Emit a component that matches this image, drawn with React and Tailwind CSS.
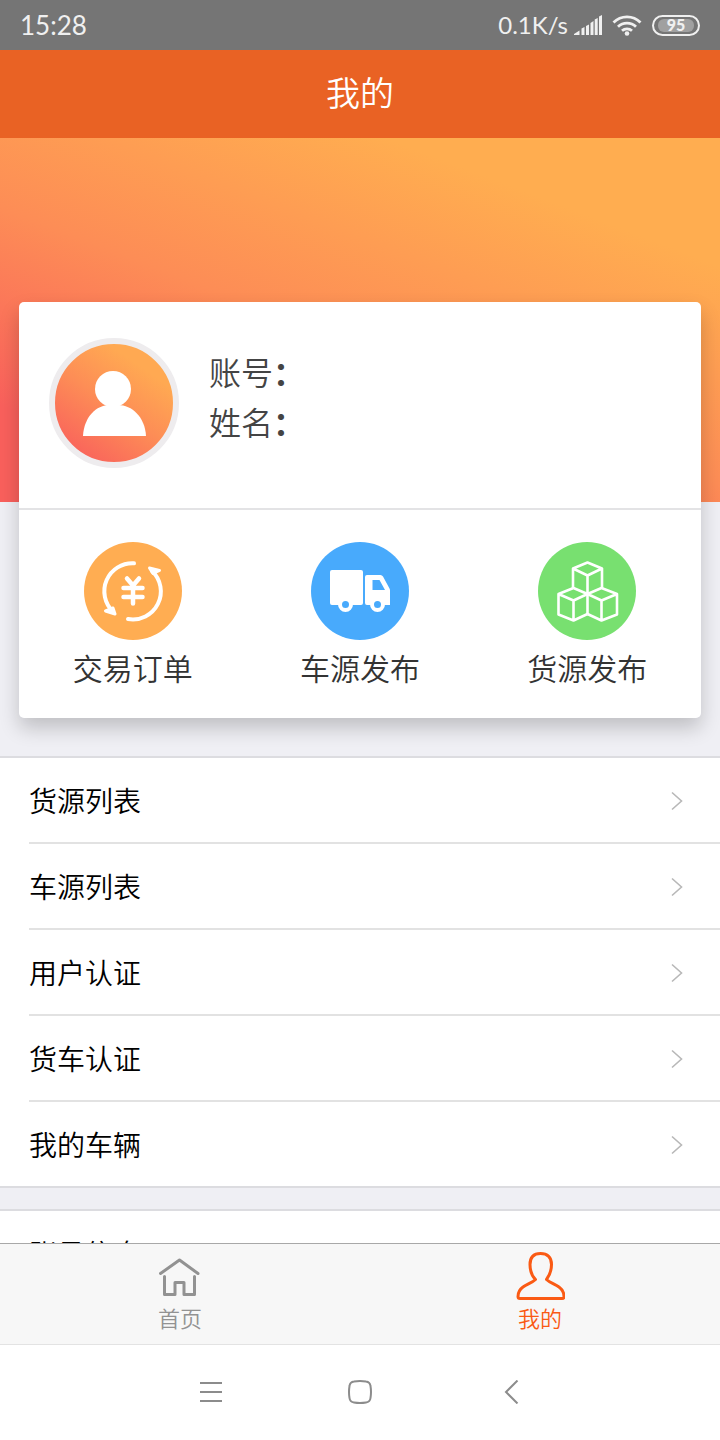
import { useState } from "react";

const SHORTCUTS = [
    { label: "交易订单", tone: "bg-[#ffad52]", icon: OrderIcon },
    { label: "车源发布", tone: "bg-[#48aafc]", icon: TruckIcon },
    { label: "货源发布", tone: "bg-[#78e070]", icon: BoxesIcon },
];

const MENU_GROUPS = [
    ["货源列表", "车源列表", "用户认证", "货车认证", "我的车辆"],
    ["账号信息"],
];

const TABS = [
    { id: "home", label: "首页", icon: HomeIcon },
    { id: "mine", label: "我的", icon: PersonIcon },
];

function OrderIcon() {
    return (
        <svg viewBox="0 0 98 98" className="size-full" fill="none" stroke="#fff" strokeWidth="4" strokeLinecap="round" strokeLinejoin="round" aria-hidden="true">
            <path d="M50 21.300A28 28 0 0 0 29 69.500M44 77a28 28 0 0 0 24-48" />
            <path fill="#fff" strokeWidth="3" d="M21.500 69l9.500 3-2-6zM75.500 28.500l-10-2.500 3.500 5.500z" />
            <path strokeWidth="4.500" d="M43 36.500l6 7 6-7M39.500 46h19M39.500 55h19M49 44v17.500" />
        </svg>
    );
}

function TruckIcon() {
    return (
        <svg viewBox="0 0 98 98" className="size-full" aria-hidden="true">
            <rect x="19" y="28" width="33" height="35" rx="2" fill="#fff" />
            <path fill="#fff" fillRule="evenodd" d="M56 33h13.500q1.500 0 2.500 1.500l6.500 12q.5 1 .5 2V63H56q-2 0-2-2V35q0-2 2-2zM61.500 38v10H74l-5.500-10z" />
            <circle cx="34.500" cy="62.500" r="5.500" fill="#48aafc" stroke="#fff" strokeWidth="4" />
            <circle cx="66.500" cy="62.500" r="5.500" fill="#48aafc" stroke="#fff" strokeWidth="4" />
        </svg>
    );
}

function BoxesIcon() {
    return (
        <svg viewBox="0 0 98 98" className="size-full" fill="none" stroke="#fff" strokeWidth="2.600" strokeLinejoin="round" aria-hidden="true">
            <path d="M49.500 20.500l14.500 6-14.500 7-14.500-7zM35 26.500V46M64 26.500V46M49.500 33.500V72" />
            <path d="M35.500 46l14 6-14 6.500-15-6.500zM20.500 52v20.500l15 6 14-6.500M35.500 58.500v20" />
            <path d="M63.500 46l15.500 6-15.500 6.500-14-6.500zM79 52v20.500l-15.500 6-14-6.500M63.500 58.500v20" />
        </svg>
    );
}

function HomeIcon() {
    return (
        <svg viewBox="0 0 50 50" className="size-[50px]" fill="none" stroke="currentColor" strokeWidth="3" strokeLinecap="round" strokeLinejoin="round" aria-hidden="true">
            <path d="M5.500 22.500L24.500 9 43 22.500M9.500 25.500V43.500h10.500V31.500h9v12h10.500V25.500" />
        </svg>
    );
}

function PersonIcon() {
    return (
        <svg viewBox="0 0 50 50" className="size-[50px]" fill="none" stroke="currentColor" strokeWidth="3" strokeLinejoin="round" aria-hidden="true">
            <path d="M25.500 2.500c-7 0-10.500 4-10.500 11 0 6 1.500 11 5.500 15-3 3-8.500 4.500-12.500 7.500-3.500 2.500-5 5.500-5 9.500q0 2 2 2h42q2 0 2-2c0-4-1.500-7-5-9.500-4-3-9.500-4.500-12.500-7.500 3-4 5-9 5-15 0-7-4-11-11-11z" />
        </svg>
    );
}

function StatusBar() {
    return (
        <div className="flex h-[50px] shrink-0 items-center justify-between bg-[#757575] px-5 font-['Lato',sans-serif] font-normal leading-8 text-[#f0f0f0]">
            <span className="text-[26px]">15:28</span>
            <div className="flex items-center">
                <span className="text-2xl">0.1K/s</span>
                <svg viewBox="0 0 28 22" className="ml-1.5 h-[22px] w-7" fill="currentColor" aria-hidden="true">
                    <path d="M0 21v-1l5.500-3.500V21zM7.500 14.500l3-1.500v8h-3zM12 12l3-1.500V21h-3zM16.500 9l3-2v14h-3zM20.700 5.500l3-1.500v17h-3zM25 2.500L28 1v20h-3z" />
                </svg>
                <svg viewBox="0 0 30 22" className="ml-2.5 h-[22px] w-[30px]" fill="none" stroke="currentColor" strokeWidth="2.800" aria-hidden="true">
                    <path d="M1.500 8.500a19 19 0 0 1 27 0M6 12.800a13 13 0 0 1 18 0M10 16.800a7.500 7.500 0 0 1 10 0" />
                    <circle cx="15" cy="19.500" r="2.300" fill="currentColor" stroke="none" />
                </svg>
                <span className="ml-2.5 flex h-[21px] w-12 items-center rounded-full border-2 border-[#f0f0f0] px-1 py-0.5">
                    <span className="flex h-full w-full items-center justify-center rounded-md bg-[#a0a0a0] text-base font-black leading-none">
                        95
                    </span>
                </span>
            </div>
        </div>
    );
}

function ProfileCard() {
    return (
        <div className="rounded-[5px] bg-white shadow-[0_10px_20px_rgba(0,0,0,0.2)]">
            <div className="flex h-[208px] border-b-2 border-[#e3e3e5] px-[30px] pt-9">
                <div className="size-[130px] shrink-0 rounded-full border-[6px] border-[#eeecee] bg-[linear-gradient(35deg,#f9605c_12%,#fd8d56_48%,#ffa952_75%)] bg-origin-border">
                    <svg viewBox="0 0 118 118" className="size-full" fill="#fff" aria-hidden="true">
                        <circle cx="58" cy="45" r="18" />
                        <path d="M28 92c1-19 13-31 27-31h8c14 0 27 12 28 31z" />
                    </svg>
                </div>
                <dl className="ml-[30px] pt-2 text-[32px] leading-[50px] text-[#444]">
                    <dt>账号<span className="font-bold">：</span></dt>
                    <dt>姓名<span className="font-bold">：</span></dt>
                </dl>
            </div>
            <div className="grid h-[208px] grid-cols-3 pt-8">
                {SHORTCUTS.map(({ label, tone, icon: Icon }) => (
                    <button key={label} type="button" className="flex flex-col items-center">
                        <span className={`size-[98px] rounded-full ${tone}`}>
                            <Icon />
                        </span>
                        <span className="mt-1.5 text-[30px] leading-[42px] text-[#333]">{label}</span>
                    </button>
                ))}
            </div>
        </div>
    );
}

function MenuGroup({ items }) {
    return (
        <ul className="border-y-2 border-[#dcdce0] bg-white">
            {items.map((item, i) => (
                <li key={item} className="pl-[29px]">
                    <a
                        href="#"
                        className={`flex items-center justify-between pr-[37px] text-[28px] leading-[84px] text-black ${i > 0 ? "border-t-2 border-[#e2e2e2]" : ""}`}
                    >
                        {item}
                        <svg viewBox="0 0 12 20" className="mt-0.5 h-5 w-3" fill="none" stroke="#b8b8b8" strokeWidth="1.600" aria-hidden="true">
                            <path d="M1 1.500l9.500 8.500L1 18.500" />
                        </svg>
                    </a>
                </li>
            ))}
        </ul>
    );
}

function SystemNav() {
    return (
        <div className="grid h-24 shrink-0 grid-cols-[1fr_24px_1fr] items-center border-t border-[#e3e3e3] bg-white pb-0.5 text-[#8c8c8c]">
            <button type="button" aria-label="菜单" className="mr-[125px] justify-self-end">
                <svg viewBox="0 0 24 24" className="size-6" stroke="currentColor" strokeWidth="2">
                    <path d="M1 3h22M1 12h22M1 21h22" />
                </svg>
            </button>
            <button type="button" aria-label="主屏幕">
                <svg viewBox="0 0 24 24" className="size-6" fill="none" stroke="currentColor" strokeWidth="2">
                    <path d="M6 1.500Q12 .5 18 1.500 22 2 22.500 6 23.500 12 22.500 18 22 22 18 22.500 12 23.500 6 22.500 2 22 1.500 18 .5 12 1.500 6 2 2 6 1.500z" />
                </svg>
            </button>
            <button type="button" aria-label="返回" className="ml-[127px] justify-self-start">
                <svg viewBox="0 0 24 24" className="size-6" fill="none" stroke="currentColor" strokeWidth="2">
                    <path d="M18.500 .5L7 12l11.500 11.500" />
                </svg>
            </button>
        </div>
    );
}

export default function App() {
    const [tab, setTab] = useState("mine");

    return (
        <div className="flex h-screen flex-col bg-[#efeff4] font-['Noto_Sans_CJK_SC',sans-serif] font-[350]">
            <StatusBar />
            <header className="flex h-[88px] shrink-0 items-center justify-center bg-[#e96224] pb-1">
                <h1 className="text-[34px] leading-[50px] text-white">我的</h1>
            </header>

            <main className="min-h-0 flex-1 overflow-y-auto [scrollbar-width:none]">
                <section className="bg-[linear-gradient(21deg,#f9605c_15%,#fd8d56_46%,#ffad50_80%)] bg-[length:100%_364px] bg-no-repeat px-[19px] pt-[164px] pb-[38px]">
                    <ProfileCard />
                </section>
                <div className="flex flex-col gap-[21px]">
                    {MENU_GROUPS.map((items) => (
                        <MenuGroup key={items[0]} items={items} />
                    ))}
                </div>
            </main>

            <nav className="grid h-[101px] shrink-0 grid-cols-2 border-t border-[#a8a8a8] bg-[#f7f7f7]">
                {TABS.map(({ id, label, icon: Icon }) => (
                    <button
                        key={id}
                        type="button"
                        onClick={() => setTab(id)}
                        className={`flex flex-col items-center pt-[7px] text-[22px] leading-8 ${tab === id ? "text-[#fa5a14]" : "text-[#929292]"}`}
                    >
                        <Icon />
                        {label}
                    </button>
                ))}
            </nav>
            <SystemNav />
        </div>
    );
}
